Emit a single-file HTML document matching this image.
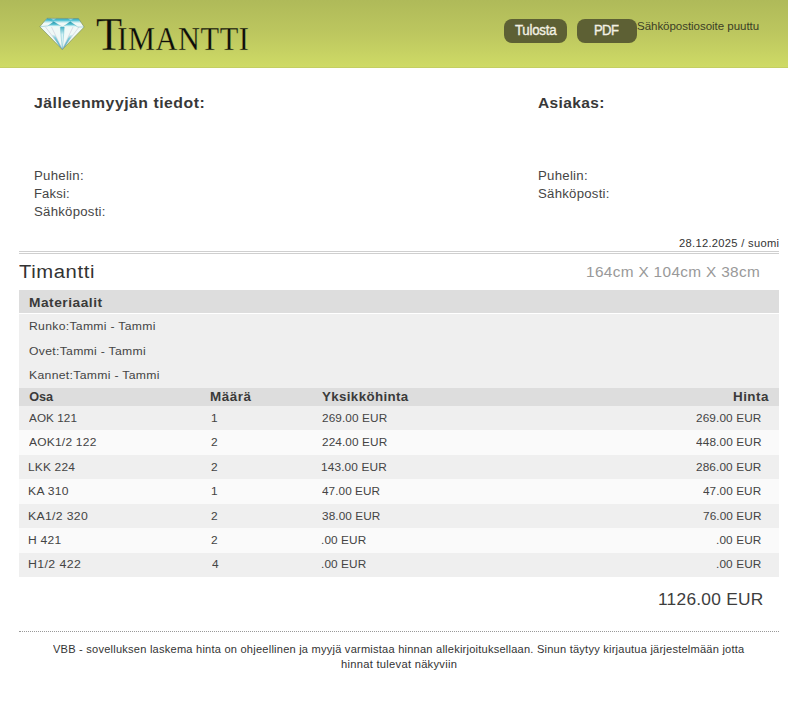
<!DOCTYPE html>
<html><head><meta charset="utf-8">
<style>
html,body{margin:0;padding:0;}
body{width:788px;height:703px;position:relative;overflow:hidden;background:#fff;font-family:"Liberation Sans",sans-serif;color:#3d3d3d;}
.t{position:absolute;white-space:nowrap;line-height:normal;font-family:"Liberation Sans",sans-serif;transform-origin:0 0;}
#hdr{position:absolute;left:0;top:0;width:788px;height:68px;background:linear-gradient(#afba59,#bdc75f 50%,#cfdb66);}
#logo{position:absolute;left:36px;top:14px;width:52px;height:39px;}
#brand{position:absolute;left:96px;top:8.5px;font-family:"Liberation Serif",serif;font-size:46.5px;font-variant:small-caps;color:#0d0d0a;line-height:52px;letter-spacing:0px;white-space:nowrap;transform-origin:0 0;transform:scaleX(0.92);-webkit-text-stroke:0.3px #bac35e;}
.btn{position:absolute;top:19px;height:24px;background:#5d6034;border-radius:8px;}
.bar{position:absolute;left:19px;width:760px;}
</style></head><body>
<div id="hdr"></div><div style="position:absolute;left:0;top:67px;width:788px;height:1px;background:#c4ce62;"></div>
<svg id="logo" viewBox="36 14 52 39">
  <defs>
    <linearGradient id="cg" gradientUnits="userSpaceOnUse" x1="0" y1="18.3" x2="0" y2="24">
      <stop offset="0" stop-color="#2aa2b8"/><stop offset="0.4" stop-color="#5ec6d6"/><stop offset="1" stop-color="#e6f7f7" stop-opacity="0"/>
    </linearGradient>
    <linearGradient id="sg" gradientUnits="userSpaceOnUse" x1="0" y1="21.5" x2="0" y2="26.5">
      <stop offset="0" stop-color="#1790a8"/><stop offset="0.6" stop-color="#5cc2d2"/><stop offset="1" stop-color="#bfeef3" stop-opacity="0.5"/>
    </linearGradient>
    <linearGradient id="kg" gradientUnits="userSpaceOnUse" x1="0" y1="26.5" x2="0" y2="49.6">
      <stop offset="0" stop-color="#38aac0"/><stop offset="0.35" stop-color="#d6f3f6"/><stop offset="0.7" stop-color="#f6fcfc"/><stop offset="1" stop-color="#c4f6fb"/>
    </linearGradient>
    <linearGradient id="lg" gradientUnits="userSpaceOnUse" x1="0" y1="32" x2="0" y2="49">
      <stop offset="0" stop-color="#e8f6f6" stop-opacity="0"/><stop offset="0.35" stop-color="#7ccbd8"/><stop offset="1" stop-color="#35acc3"/>
    </linearGradient>
  </defs>
  <polygon points="46.9,18.3 78.5,18.5 84.2,27 62.3,49.6 39.8,26.7" fill="#f0f9f7"/>
  <polygon points="46.9,18.4 78.5,18.6 81.5,23 43.2,23" fill="url(#cg)"/>
  <path d="M50.8,18.4 Q53.6,20.6 56.4,18.4 Z M67.6,18.5 Q70.6,20.6 73.8,18.5 Z" fill="#f2fbfb" opacity="0.9"/>
  <polygon points="53.8,21.6 47.5,26.3 61,26.6" fill="url(#sg)"/>
  <polygon points="70.2,21.5 63.6,26.6 77.8,27" fill="url(#sg)"/>
  <polyline points="40.2,26.7 47.9,25.9 53.8,22.0 61.1,26.2 62.3,26.8 63.5,26.4 70.2,21.8 77.8,27.0 83.8,27" fill="none" stroke="#3c9db0" stroke-width="0.5" stroke-opacity="0.7"/>
  <polyline points="46.9,18.5 53.8,22.0 M70.2,21.8 78.5,18.7" fill="none" stroke="#3aa6b8" stroke-width="0.6" stroke-opacity="0.8"/>
  <polygon points="51.6,34.5 55.2,35.5 62.3,49.3 59.5,46.5" fill="url(#lg)"/>
  <polygon points="73,34.5 69.4,35.5 62.3,49.3 65.1,46.5" fill="url(#lg)"/>
  <polygon points="60.3,27 64.3,27 62.3,49.3" fill="url(#kg)"/>
  <g stroke="#b5aec4" stroke-width="0.45" fill="none" stroke-opacity="0.85">
    <line x1="45.5" y1="27" x2="62.3" y2="49.3"/><line x1="51.5" y1="27" x2="62.3" y2="49.3"/>
    <line x1="79" y1="27" x2="62.3" y2="49.3"/><line x1="73" y1="27" x2="62.3" y2="49.3"/>
  </g>
  <polyline points="60.3,27 62.3,49.3 64.3,27" fill="none" stroke="#4fb2c4" stroke-width="0.5" stroke-opacity="0.8"/>
  <polygon points="46.9,18.3 78.5,18.5 84.2,27 62.3,49.6 39.8,26.7" fill="none" stroke="#6a8455" stroke-width="0.65" stroke-opacity="0.85"/>
</svg>
<div id="brand"><span style="margin-right:-5.4px">T</span><span style="letter-spacing:0.65px">imantti</span></div>
<div class="btn" style="left:504px;width:63px;"></div>
<div class="btn" style="left:577px;width:60px;"></div>

<div class="bar" style="top:251px;height:1px;background:#cfcfcf;"></div>
<div class="bar" style="top:253px;height:1px;background:#cfcfcf;"></div>

<div class="bar" style="top:290px;height:23px;background:#dddddd;"></div>
<div class="bar" style="top:314px;height:74px;background:#efefef;"></div>
<div class="bar" style="top:388px;height:18px;background:#dddddd;"></div>
<div class="bar" style="top:406px;height:24.43px;background:#efefef;"></div>
<div class="bar" style="top:430.43px;height:24.43px;background:#fafafa;"></div>
<div class="bar" style="top:454.86px;height:24.43px;background:#efefef;"></div>
<div class="bar" style="top:479.29px;height:24.43px;background:#fafafa;"></div>
<div class="bar" style="top:503.72px;height:24.43px;background:#efefef;"></div>
<div class="bar" style="top:528.15px;height:24.43px;background:#fafafa;"></div>
<div class="bar" style="top:552.58px;height:24.43px;background:#efefef;"></div>
<div class="bar" style="top:631px;height:0;border-top:1px dotted #999;"></div>
<div class="t" style="left:514.76px;top:23px;font-size:13.74px;letter-spacing:-0.254px;transform:scaleX(0.9667);color:#f3f1e3;-webkit-text-stroke:0.35px currentColor;">Tulosta</div>
<div class="t" style="left:594.31px;top:23px;font-size:13.74px;letter-spacing:-0.643px;transform:scaleX(0.9524);color:#f3f1e3;-webkit-text-stroke:0.35px currentColor;">PDF</div>
<div class="t" style="left:637.00px;top:19px;font-size:11.63px;letter-spacing:-0.045px;transform:scaleX(0.9921);color:#3c3e26;">Sähköpostiosoite puuttu</div>
<div class="t" style="left:34.33px;top:95px;font-size:14.80px;letter-spacing:0.470px;transform:scaleX(1.0674);color:#383838;font-weight:bold;">Jälleenmyyjän tiedot:</div>
<div class="t" style="left:33.86px;top:169px;font-size:12.68px;letter-spacing:0.254px;transform:scaleX(1.0425);color:#454545;">Puhelin:</div>
<div class="t" style="left:33.87px;top:187px;font-size:12.68px;letter-spacing:0.166px;transform:scaleX(1.0270);color:#454545;">Faksi:</div>
<div class="t" style="left:34.12px;top:205px;font-size:12.68px;letter-spacing:0.248px;transform:scaleX(1.0401);color:#454545;">Sähköposti:</div>
<div class="t" style="left:538.38px;top:95px;font-size:14.80px;letter-spacing:0.375px;transform:scaleX(1.0466);color:#383838;font-weight:bold;">Asiakas:</div>
<div class="t" style="left:537.56px;top:169px;font-size:12.68px;letter-spacing:0.254px;transform:scaleX(1.0425);color:#454545;">Puhelin:</div>
<div class="t" style="left:537.82px;top:187px;font-size:12.68px;letter-spacing:0.248px;transform:scaleX(1.0401);color:#454545;">Sähköposti:</div>
<div class="t" style="left:679.27px;top:237px;font-size:10.57px;letter-spacing:0.280px;transform:scaleX(1.0566);color:#333333;">28.12.2025 / suomi</div>
<div class="t" style="left:18.97px;top:261px;font-size:19.03px;letter-spacing:0.561px;transform:scaleX(1.0640);color:#333333;">Timantti</div>
<div class="t" style="left:585.80px;top:264px;font-size:14.80px;letter-spacing:0.318px;transform:scaleX(1.0395);color:#999999;">164cm X 104cm X 38cm</div>
<div class="t" style="left:28.89px;top:296px;font-size:12.68px;letter-spacing:0.477px;transform:scaleX(1.0838);color:#3a3a3a;font-weight:bold;">Materiaalit</div>
<div class="t" style="left:28.65px;top:319px;font-size:11.63px;letter-spacing:0.289px;transform:scaleX(1.0480);color:#444444;">Runko:Tammi - Tammi</div>
<div class="t" style="left:29.18px;top:344px;font-size:11.63px;letter-spacing:0.289px;transform:scaleX(1.0490);color:#444444;">Ovet:Tammi - Tammi</div>
<div class="t" style="left:28.65px;top:368px;font-size:11.63px;letter-spacing:0.294px;transform:scaleX(1.0503);color:#444444;">Kannet:Tammi - Tammi</div>
<div class="t" style="left:29.20px;top:390px;font-size:12.68px;letter-spacing:0.000px;transform:scaleX(1.0000);color:#3a3a3a;font-weight:bold;">Osa</div>
<div class="t" style="left:210.41px;top:390px;font-size:12.68px;letter-spacing:0.496px;transform:scaleX(1.0583);color:#3a3a3a;font-weight:bold;">Määrä</div>
<div class="t" style="left:322.34px;top:390px;font-size:12.68px;letter-spacing:0.346px;transform:scaleX(1.0513);color:#3a3a3a;font-weight:bold;">Yksikköhinta</div>
<div class="t" style="left:732.61px;top:390px;font-size:12.68px;letter-spacing:0.436px;transform:scaleX(1.0597);color:#3a3a3a;font-weight:bold;">Hinta</div>
<div class="t" style="left:658.42px;top:590px;font-size:16.91px;letter-spacing:0.246px;transform:scaleX(1.0257);color:#3d3d3d;">1126.00 EUR</div>
<div class="t" style="left:53.20px;top:643px;font-size:10.57px;letter-spacing:0.213px;transform:scaleX(1.0481);color:#333333;">VBB - sovelluksen laskema hinta on ohjeellinen ja myyjä varmistaa hinnan allekirjoituksellaan. Sinun täytyy kirjautua järjestelmään jotta</div>
<div class="t" style="left:341.31px;top:658px;font-size:10.57px;letter-spacing:0.256px;transform:scaleX(1.0580);color:#333333;">hinnat tulevat näkyviin</div>
<div class="t" style="left:29.40px;top:411px;font-size:11.63px;letter-spacing:0.066px;transform:scaleX(1.0086);color:#444444;">AOK 121</div>
<div class="t" style="left:210.78px;top:411px;font-size:11.63px;letter-spacing:0.158px;transform:scaleX(1.0241);color:#444444;">1</div>
<div class="t" style="left:321.99px;top:411px;font-size:11.63px;letter-spacing:0.101px;transform:scaleX(1.0149);color:#444444;">269.00 EUR</div>
<div class="t" style="left:696.19px;top:411px;font-size:11.63px;letter-spacing:0.107px;transform:scaleX(1.0157);color:#444444;">269.00 EUR</div>
<div class="t" style="left:29.40px;top:435px;font-size:11.63px;letter-spacing:0.213px;transform:scaleX(1.0315);color:#444444;">AOK1/2 122</div>
<div class="t" style="left:211.29px;top:435px;font-size:11.63px;letter-spacing:0.158px;transform:scaleX(1.0241);color:#444444;">2</div>
<div class="t" style="left:321.99px;top:435px;font-size:11.63px;letter-spacing:0.101px;transform:scaleX(1.0149);color:#444444;">224.00 EUR</div>
<div class="t" style="left:695.95px;top:435px;font-size:11.63px;letter-spacing:0.120px;transform:scaleX(1.0176);color:#444444;">448.00 EUR</div>
<div class="t" style="left:28.37px;top:460px;font-size:11.63px;letter-spacing:0.183px;transform:scaleX(1.0260);color:#444444;">LKK 224</div>
<div class="t" style="left:211.29px;top:460px;font-size:11.63px;letter-spacing:0.158px;transform:scaleX(1.0241);color:#444444;">2</div>
<div class="t" style="left:321.48px;top:460px;font-size:11.63px;letter-spacing:0.128px;transform:scaleX(1.0190);color:#444444;">143.00 EUR</div>
<div class="t" style="left:696.19px;top:460px;font-size:11.63px;letter-spacing:0.107px;transform:scaleX(1.0157);color:#444444;">286.00 EUR</div>
<div class="t" style="left:28.36px;top:484px;font-size:11.63px;letter-spacing:0.288px;transform:scaleX(1.0417);color:#444444;">KA 310</div>
<div class="t" style="left:210.78px;top:484px;font-size:11.63px;letter-spacing:0.158px;transform:scaleX(1.0241);color:#444444;">1</div>
<div class="t" style="left:322.25px;top:484px;font-size:11.63px;letter-spacing:0.074px;transform:scaleX(1.0107);color:#444444;">47.00 EUR</div>
<div class="t" style="left:703.35px;top:484px;font-size:11.63px;letter-spacing:0.080px;transform:scaleX(1.0116);color:#444444;">47.00 EUR</div>
<div class="t" style="left:28.35px;top:509px;font-size:11.63px;letter-spacing:0.318px;transform:scaleX(1.0507);color:#444444;">KA1/2 320</div>
<div class="t" style="left:211.29px;top:509px;font-size:11.63px;letter-spacing:0.158px;transform:scaleX(1.0241);color:#444444;">2</div>
<div class="t" style="left:321.99px;top:509px;font-size:11.63px;letter-spacing:0.089px;transform:scaleX(1.0130);color:#444444;">38.00 EUR</div>
<div class="t" style="left:703.09px;top:509px;font-size:11.63px;letter-spacing:0.096px;transform:scaleX(1.0139);color:#444444;">76.00 EUR</div>
<div class="t" style="left:28.36px;top:533px;font-size:11.63px;letter-spacing:0.253px;transform:scaleX(1.0356);color:#444444;">H 421</div>
<div class="t" style="left:211.29px;top:533px;font-size:11.63px;letter-spacing:0.158px;transform:scaleX(1.0241);color:#444444;">2</div>
<div class="t" style="left:321.49px;top:533px;font-size:11.63px;letter-spacing:0.103px;transform:scaleX(1.0148);color:#444444;">.00 EUR</div>
<div class="t" style="left:716.28px;top:533px;font-size:11.63px;letter-spacing:0.111px;transform:scaleX(1.0160);color:#444444;">.00 EUR</div>
<div class="t" style="left:28.34px;top:557px;font-size:11.63px;letter-spacing:0.370px;transform:scaleX(1.0604);color:#444444;">H1/2 422</div>
<div class="t" style="left:211.54px;top:557px;font-size:11.63px;letter-spacing:0.158px;transform:scaleX(1.0241);color:#444444;">4</div>
<div class="t" style="left:321.49px;top:557px;font-size:11.63px;letter-spacing:0.103px;transform:scaleX(1.0148);color:#444444;">.00 EUR</div>
<div class="t" style="left:716.28px;top:557px;font-size:11.63px;letter-spacing:0.111px;transform:scaleX(1.0160);color:#444444;">.00 EUR</div>
</body></html>
